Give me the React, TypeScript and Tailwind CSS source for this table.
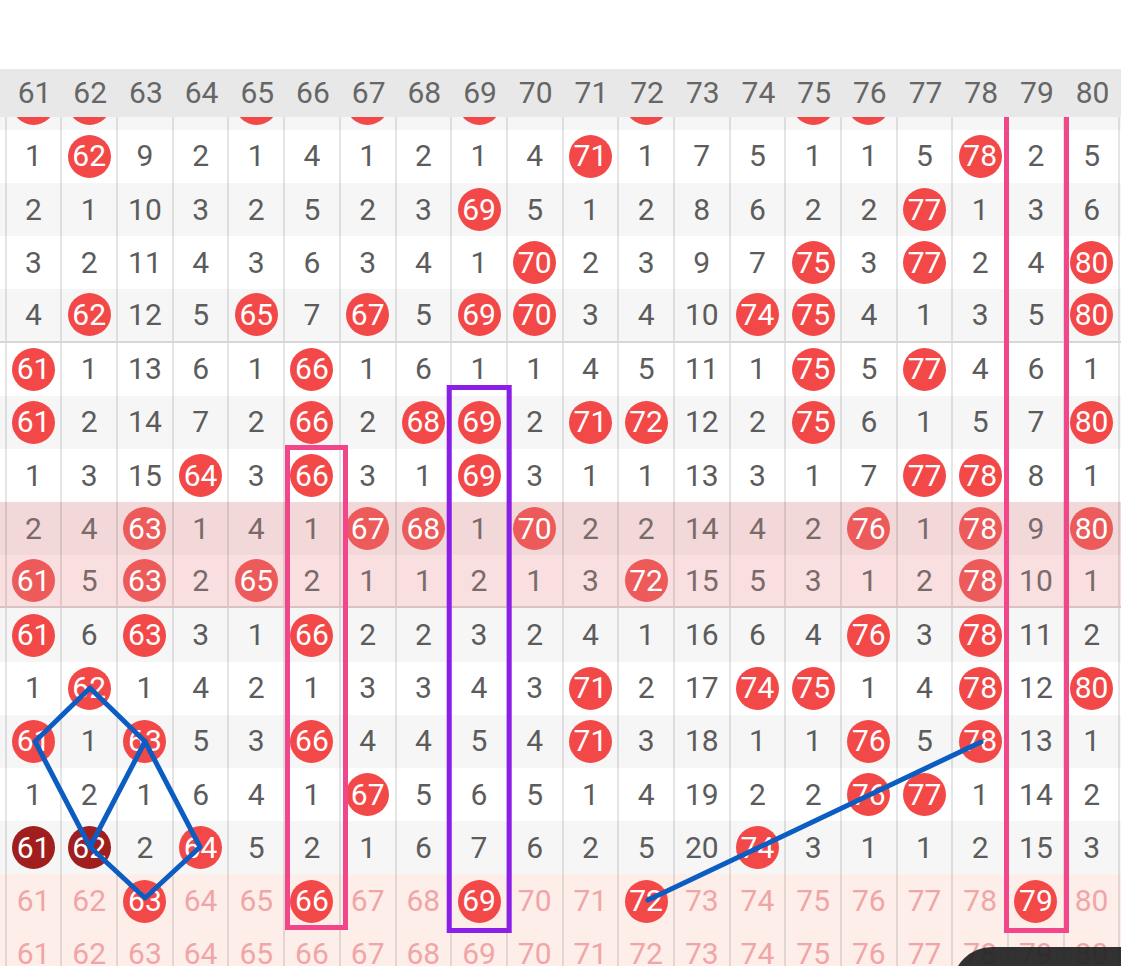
import React from "react";

// 0 = red ball, -1 = dark ball, >0 = plain number. Columns 61..80
const body: number[][] = [
  [0, 0, 8, 1, 0, 3, 0, 1, 0, 3, 2, 0, 6, 4, 0, 0, 4, 1, 1, 4],
  [1, 0, 9, 2, 1, 4, 1, 2, 1, 4, 0, 1, 7, 5, 1, 1, 5, 0, 2, 5],
  [2, 1, 10, 3, 2, 5, 2, 3, 0, 5, 1, 2, 8, 6, 2, 2, 0, 1, 3, 6],
  [3, 2, 11, 4, 3, 6, 3, 4, 1, 0, 2, 3, 9, 7, 0, 3, 0, 2, 4, 0],
  [4, 0, 12, 5, 0, 7, 0, 5, 0, 0, 3, 4, 10, 0, 0, 4, 1, 3, 5, 0],
  [0, 1, 13, 6, 1, 0, 1, 6, 1, 1, 4, 5, 11, 1, 0, 5, 0, 4, 6, 1],
  [0, 2, 14, 7, 2, 0, 2, 0, 0, 2, 0, 0, 12, 2, 0, 6, 1, 5, 7, 0],
  [1, 3, 15, 0, 3, 0, 3, 1, 0, 3, 1, 1, 13, 3, 1, 7, 0, 0, 8, 1],
  [2, 4, 0, 1, 4, 1, 0, 0, 1, 0, 2, 2, 14, 4, 2, 0, 1, 0, 9, 0],
  [0, 5, 0, 2, 0, 2, 1, 1, 2, 1, 3, 0, 15, 5, 3, 1, 2, 0, 10, 1],
  [0, 6, 0, 3, 1, 0, 2, 2, 3, 2, 4, 1, 16, 6, 4, 0, 3, 0, 11, 2],
  [1, 0, 1, 4, 2, 1, 3, 3, 4, 3, 0, 2, 17, 0, 0, 1, 4, 0, 12, 0],
  [0, 1, 0, 5, 3, 0, 4, 4, 5, 4, 0, 3, 18, 1, 1, 0, 5, 0, 13, 1],
  [1, 2, 1, 6, 4, 1, 0, 5, 6, 5, 1, 4, 19, 2, 2, 0, 0, 1, 14, 2],
  [-1, -1, 2, 0, 5, 2, 1, 6, 7, 6, 2, 5, 20, 0, 3, 1, 1, 2, 15, 3],
];

// hidden partial column 60
const col60 = [2, 3, 4, 5, 6, 0, 1, 2, 3, 0, 1, 2, 3, 0, 0];

const bottomBalls15 = [63, 66, 69, 72, 79];

type Kind = "gray" | "white" | "hlA" | "hlB" | "bottom";

function rowKind(i: number): Kind {
  if (i === 8) return "hlA";
  if (i === 9) return "hlB";
  if (i >= 15) return "bottom";
  return i % 2 === 0 ? "gray" : "white";
}

function rowBg(k: Kind) {
  switch (k) {
    case "gray":
      return "bg-[#f6f6f6]";
    case "white":
      return "bg-white";
    case "hlA":
      return "bg-[#f2d8d8]";
    case "hlB":
      return "bg-[#f9dfdf]";
    default:
      return "bg-[#fdeeea]";
  }
}

function textColor(k: Kind) {
  if (k === "hlA" || k === "hlB") return "text-[#7a6a6a]";
  if (k === "bottom") return "text-[#f0a6a6]";
  return "text-[#5c5c5c]";
}

function Ball({ n, dark, soft }: { n: number; dark?: boolean; soft?: boolean }) {
  const bg = dark ? "bg-[#a01e1e]" : soft ? "bg-[#ec5a5a]" : "bg-[#f34848]";
  return (
    <div className={`flex h-[43px] w-[43px] items-center justify-center rounded-full text-white ${bg}`}>
      {n}
    </div>
  );
}

function Cell({ children }: { children: React.ReactNode }) {
  return (
    <div className="flex h-full w-[55.7px] shrink-0 items-center justify-center border-r-2 border-[rgba(0,0,0,0.1)]">
      {children}
    </div>
  );
}

export default function App() {
  const header = Array.from({ length: 20 }, (_, i) => 61 + i);
  const allRows: React.ReactNode[] = [];

  for (let i = 0; i < 17; i++) {
    const k = rowKind(i);
    const sep = i === 4 || i === 9 ? "border-b-2 border-[rgba(0,0,0,0.13)]" : "";
    const cells: React.ReactNode[] = [];
    if (i < 15) {
      const v = col60[i];
      cells.push(
        <Cell key="c60">{v === 0 ? <Ball n={60} soft={k === "hlA" || k === "hlB"} /> : v}</Cell>
      );
    } else {
      cells.push(<Cell key="c60">60</Cell>);
    }
    for (let c = 0; c < 20; c++) {
      const col = 61 + c;
      let content: React.ReactNode;
      if (i < 15) {
        const v = body[i][c];
        if (v === 0) content = <Ball n={col} soft={k === "hlA" || k === "hlB"} />;
        else if (v === -1) content = <Ball n={col} dark />;
        else content = v;
      } else if (i === 15 && bottomBalls15.includes(col)) {
        content = <Ball n={col} />;
      } else {
        content = col;
      }
      cells.push(<Cell key={col}>{content}</Cell>);
    }
    allRows.push(
      <div key={i} className={`flex h-[53.2px] shrink-0 ${rowBg(k)} ${textColor(k)} ${sep}`}>
        {cells}
      </div>
    );
  }

  return (
    <div className="relative h-[966px] w-[1121px] overflow-hidden bg-white font-['Roboto',sans-serif] text-[30px] leading-none">
      <div className="h-[69px] bg-white" />
      <div className="relative z-20 flex h-[48px] items-center bg-[#e8e8e8] pl-[6.7px] text-[#666666]">
        {header.map((n) => (
          <div key={n} className="flex w-[55.7px] shrink-0 justify-center">
            {n}
          </div>
        ))}
      </div>
      <div className="relative h-[849px] overflow-hidden">
        <div className="ml-[-49px] mt-[-40.4px] flex w-[1170px] flex-col">{allRows}</div>
      </div>

      <svg
        className="pointer-events-none absolute left-0 top-0 z-10"
        width={1121}
        height={966}
        viewBox="0 0 1121 966"
      >
        <rect x={287.5} y={447.5} width={58} height={480} fill="none" stroke="#f2468b" strokeWidth={5} />
        <rect x={449.2} y={387.5} width={60} height={543} fill="none" stroke="#8b1fe8" strokeWidth={5} />
        <rect x={1006.5} y={100} width={60} height={830.5} fill="none" stroke="#f2468b" strokeWidth={5} />
        <g stroke="#0c5dc2" strokeWidth={5} fill="none" strokeLinejoin="round" strokeLinecap="round">
          <polyline points="35,741.5 90,688 145,741.5 200,847 145,898 90,847 35,741.5" />
          <line x1={145} y1={741.5} x2={90} y2={847} />
          <line x1={648} y1={900} x2={981} y2={742} />
        </g>
      </svg>

      <div className="absolute left-[952px] top-[947px] z-30 h-[60px] w-[220px] rounded-tl-[40px] bg-[rgba(36,36,36,0.93)]" />
    </div>
  );
}
